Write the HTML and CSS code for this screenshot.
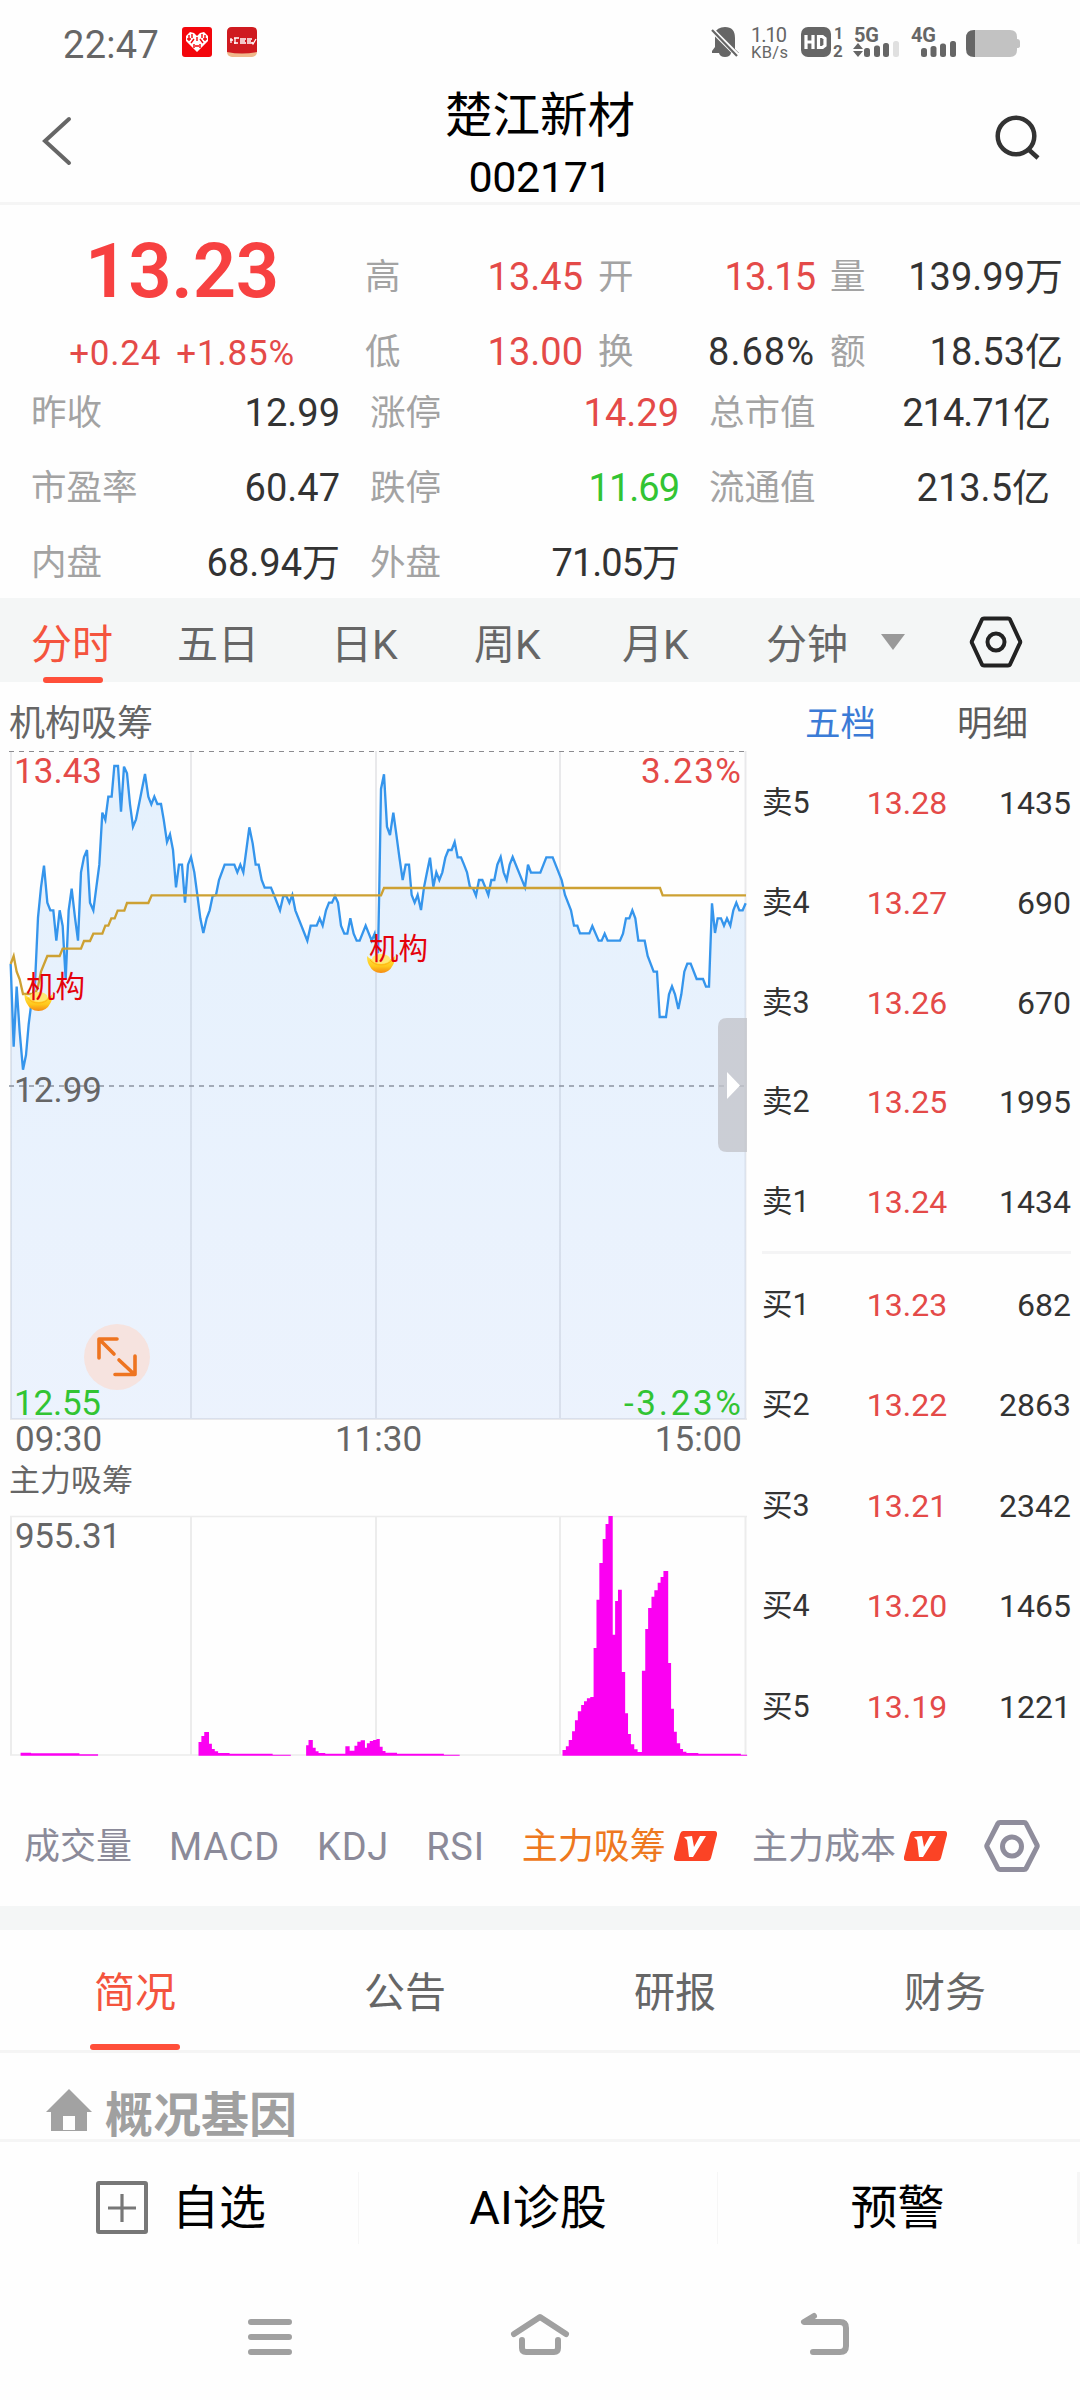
FILE: index.html
```html
<!DOCTYPE html>
<html lang="zh-CN">
<head>
<meta charset="utf-8">
<title>楚江新材 002171</title>
<link rel="stylesheet" href="styles.css">
</head>
<body>
<div class="phone">
  <header class="status">
    <span class="clock">22:47</span>
    <svg class="app" width="30" height="30" viewBox="0 0 30 30"><rect width="30" height="30" rx="3" fill="#f3060c"/><path d="M15 25 4 14V9l4-4 4 1 3 3 3-3 4-1 4 4v5z" fill="#fff"/><path d="M7 8v6M10 7v4M12 12l-3 4M15 10v4M18 12l3 4M20 7v4M23 8v6M12 17v4M18 17v4M5 12h4M21 12h4M13 19h4" stroke="#f3060c" stroke-width="1.4"/></svg>
    <svg class="app app2" width="30" height="30" viewBox="0 0 30 30"><rect width="30" height="30" rx="5" fill="#f0b98c"/><path d="M0 5q0-5 5-5h20q5 0 5 5v20q-15 3-30 0z" fill="#cf1a20"/><path d="M4 11v5M3 13h3M7 11h5M7 16h4M8 11v6M13 12h6M13 14h5M13 16h6M20 12h5M20 14h4M20 16h5M25 15l1 2 3-5" stroke="#fff" stroke-width="1.3" fill="none"/></svg>
    <span class="grow"></span>
    <svg class="sys" width="320" height="36" viewBox="705 24 320 36" fill="#666">
      <path d="M714 34q3-7 11-7 10 0 10 11v11l4 4h-8q-1 4-6 4t-6-4h-7v-2l3-4V36z"/>
      <path d="M711 29l27 27" stroke="#fff" stroke-width="5"/><path d="M712 30l25 26" stroke="#666" stroke-width="2.2"/>
      <text x="751" y="42" font-size="20" textLength="36">1.10</text>
      <text x="751" y="57.500" font-size="16.500" textLength="37">KB/s</text>
      <rect x="801" y="27" width="30" height="30" rx="7"/>
      <path d="M806 35v14M813 35v14M806 42h7M818.500 36.500v11h4l2.500-2v-7l-2.500-2z" fill="none" stroke="#fff" stroke-width="3.200"/>
      <text x="834" y="39" font-size="16" font-weight="700">1</text>
      <text x="833" y="57" font-size="17" font-weight="700">2</text>
      <text x="854" y="42" font-size="20" font-weight="700" textLength="25">5G</text>
      <path d="M853 49l5-6 5 6zM853 51l5 6 5-6z"/>
      <rect x="864" y="48" width="6" height="9" rx="2.500"/><rect x="874" y="45.500" width="6" height="11.500" rx="2.500"/><rect x="883" y="43" width="6" height="14" rx="2.500"/><rect x="893" y="41" width="6" height="16" rx="2.500" fill="#e0e0e0"/>
      <text x="911" y="42" font-size="20" font-weight="700" textLength="25">4G</text>
      <rect x="921" y="48" width="6" height="9" rx="2.500"/><rect x="930.500" y="46" width="6" height="11" rx="2.500"/><rect x="940" y="43.500" width="6" height="13.500" rx="2.500"/><rect x="950" y="41" width="6" height="16" rx="2.500"/>
      <path d="M974 30h36q7 0 7 7v2q3 0 3 3v4q0 2-3 2v2q0 7-7 7h-36z" fill="#c2c2c2"/><path d="M975 30h-1q-8 0-8 8v11q0 8 8 8h1z"/>
    </svg>
  </header>

  <nav class="title-bar">
    <svg width="34" height="52" viewBox="0 0 34 52" fill="none" stroke="#666" stroke-width="4" stroke-linecap="round"><path d="M29 5 5 27l24 22"/></svg>
    <div class="title"><div class="name">楚江新材</div><div class="code">002171</div></div>
    <svg width="48" height="48" viewBox="0 0 48 48" fill="none" stroke="#333" stroke-width="4.500"><circle cx="22" cy="22" r="18.300"/><path d="M34 35l10 9"/></svg>
  </nav>

  <section class="quote">
    <div class="summary">
      <div class="price">13.23</div>
      <div class="change"><span>+0.24</span><span>+1.85%</span></div>
    </div>
    <div class="grid top">
      <div class="cell"><label>高</label><b class="up">13.45</b></div>
      <div class="cell"><label>开</label><b class="up tight">13.15</b></div>
      <div class="cell"><label>量</label><b>139.99万</b></div>
      <div class="cell"><label>低</label><b class="up">13.00</b></div>
      <div class="cell"><label>换</label><b class="wide">8.68%</b></div>
      <div class="cell"><label>额</label><b>18.53亿</b></div>
    </div>
  </section>
  <section class="grid more">
    <div class="cell"><label>昨收</label><b>12.99</b></div>
    <div class="cell"><label>涨停</label><b class="up">14.29</b></div>
    <div class="cell"><label>总市值</label><b class="tight">214.71亿</b></div>
    <div class="cell"><label>市盈率</label><b>60.47</b></div>
    <div class="cell"><label>跌停</label><b class="down tight">11.69</b></div>
    <div class="cell"><label>流通值</label><b>213.5亿</b></div>
    <div class="cell"><label>内盘</label><b>68.94万</b></div>
    <div class="cell"><label>外盘</label><b class="tight">71.05万</b></div>
  </section>

  <nav class="periods">
    <span class="on">分时</span><span>五日</span><span>日K</span><span>周K</span><span>月K</span><span>分钟</span>
    <svg class="caret" width="24" height="16" viewBox="0 0 24 16"><path d="M0 0h24L12 16z" fill="#999"/></svg>
    <svg class="hex" width="54" height="52" viewBox="0 0 54 52" fill="none" stroke="#222" stroke-width="4"><path d="M15 2.500h24q1.500 0 2 1L51 25q.5 1 0 2L41 48.500q-.5 1-2 1H15q-1.500 0-2-1L3 27q-.5-1 0-2L13 3.500q.5-1 2-1z"/><circle cx="27" cy="26" r="8.500"/></svg>
  </nav>

  <main class="market">
    <div class="charts">
      <h2 class="chart-title">机构吸筹</h2>
      <svg class="chart" width="750" height="671" viewBox="0 749 750 671">
        <path d="M11 751V1419M191 751V1419M376 751V1419M560 751V1419M745.500 751V1419M10 1419H747" stroke="#e9e9eb" stroke-width="2"/>
        <path d="M9 751.500H747" stroke="#8c8c90" stroke-width="1.200" stroke-dasharray="5 5"/>
        <defs>
          <linearGradient id="area" x1="0" y1="0" x2="0" y2="1"><stop offset="0" stop-color="#2a90f5" stop-opacity=".12"/><stop offset="1" stop-color="#4a8cf5" stop-opacity=".1"/></linearGradient>
          <linearGradient id="gold" x1="0" y1="0" x2="0" y2="1"><stop offset="0" stop-color="#ffe34a"/><stop offset=".6" stop-color="#ffc91c"/><stop offset="1" stop-color="#f58a13"/></linearGradient>
          <path id="trend" d="M32,822 41,1070 50,890 59,1025 69,1139 78,1095 86,1003 92,955 105,880 114,683 123,592 132,527 142,638 151,661 160,661 169,752 179,661 188,708 197,868 206,661 215,596 225,683 234,752 243,547 252,501 261,480 270,638 280,661 289,592 298,524 307,368 316,390 325,320 335,320 343,228 354,228 363,365 372,230 381,250 390,343 399,410 408,388 417,343 426,297 435,252 445,320 454,343 463,320 472,342 483,342 491,388 501,456 510,433 519,480 528,592 537,524 546,524 555,638 564,524 573,501 583,547 592,615 601,685 610,729 620,685 629,661 638,618 648,615 657,570 674,524 703,524 712,547 721,524 730,547 739,480 748,412 758,460 767,524 776,524 785,570 794,593 813,593 822,615 840,661 850,618 859,618 868,638 877,615 886,661 922,752 932,707 950,707 959,685 968,707 978,661 987,638 996,638 1005,618 1014,638 1023,707 1033,731 1042,731 1051,685 1061,731 1070,752 1079,752 1097,707 1115,752 1124,731 1134,790 1138,590 1143,297 1152,253 1161,410 1170,435 1180,368 1189,433 1198,501 1208,570 1217,524 1227,524 1235,615 1244,638 1253,615 1263,660 1272,592 1281,547 1290,503 1300,590 1309,547 1318,570 1327,547 1336,503 1345,480 1355,480 1364,456 1373,502 1383,502 1392,524 1401,547 1410,592 1419,595 1428,617 1437,570 1447,570 1456,592 1465,615 1474,570 1483,570 1492,524 1502,501 1511,547 1520,570 1529,524 1538,501 1575,592 1584,524 1593,548 1621,548 1639,502 1658,502 1685,570 1695,615 1713,661 1722,707 1732,707 1740,730 1768,730 1777,708 1796,752 1805,752 1814,731 1823,752 1860,752 1869,731 1878,685 1888,685 1897,661 1906,685 1915,752 1934,752 1943,798 1961,845 1971,845 1979,981 1998,981 2007,913 2016,889 2025,913 2035,957 2044,913 2053,845 2062,821 2072,821 2090,867 2109,867 2118,890 2127,890 2136,640 2145,729 2153,685 2163,685 2172,707 2181,685 2191,707 2200,661 2209,638 2218,661 2228,661 2237,640"/>
          <g id="ingot"><path d="M-14-8q0 6 2 9 4 8 12 8t12-8q2-3 2-9-4 5-14 5t-14-5z" fill="url(#gold)"/><ellipse cy="-5" rx="9" ry="5" fill="#ffe873"/><path d="M-11-4q4 5 11 5t11-5" fill="none" stroke="#ffb515"/></g>
        </defs>
        <g transform="translate(0 690) scale(.33333)" fill="none" stroke-width="7">
          <path fill="url(#area)" d="M32,2187V822L41,1070 50,890 59,1025 69,1139 78,1095 86,1003 92,955 105,880 114,683 123,592 132,527 142,638 151,661 160,661 169,752 179,661 188,708 197,868 206,661 215,596 225,683 234,752 243,547 252,501 261,480 270,638 280,661 289,592 298,524 307,368 316,390 325,320 335,320 343,228 354,228 363,365 372,230 381,250 390,343 399,410 408,388 417,343 426,297 435,252 445,320 454,343 463,320 472,342 483,342 491,388 501,456 510,433 519,480 528,592 537,524 546,524 555,638 564,524 573,501 583,547 592,615 601,685 610,729 620,685 629,661 638,618 648,615 657,570 674,524 703,524 712,547 721,524 730,547 739,480 748,412 758,460 767,524 776,524 785,570 794,593 813,593 822,615 840,661 850,618 859,618 868,638 877,615 886,661 922,752 932,707 950,707 959,685 968,707 978,661 987,638 996,638 1005,618 1014,638 1023,707 1033,731 1042,731 1051,685 1061,731 1070,752 1079,752 1097,707 1115,752 1124,731 1134,790 1138,590 1143,297 1152,253 1161,410 1170,435 1180,368 1189,433 1198,501 1208,570 1217,524 1227,524 1235,615 1244,638 1253,615 1263,660 1272,592 1281,547 1290,503 1300,590 1309,547 1318,570 1327,547 1336,503 1345,480 1355,480 1364,456 1373,502 1383,502 1392,524 1401,547 1410,592 1419,595 1428,617 1437,570 1447,570 1456,592 1465,615 1474,570 1483,570 1492,524 1502,501 1511,547 1520,570 1529,524 1538,501 1575,592 1584,524 1593,548 1621,548 1639,502 1658,502 1685,570 1695,615 1713,661 1722,707 1732,707 1740,730 1768,730 1777,708 1796,752 1805,752 1814,731 1823,752 1860,752 1869,731 1878,685 1888,685 1897,661 1906,685 1915,752 1934,752 1943,798 1961,845 1971,845 1979,981 1998,981 2007,913 2016,889 2025,913 2035,957 2044,913 2053,845 2062,821 2072,821 2090,867 2109,867 2118,890 2127,890 2136,640 2145,729 2153,685 2163,685 2172,707 2181,685 2191,707 2200,661 2209,638 2218,661 2228,661 2237,640V2187z"/>
          <use href="#trend" stroke="#3595ec"/>
          <path stroke="#cda133" d="M32,822 41,798 50,845 59,868 69,912 105,912 114,890 123,845 142,798 179,798 188,776 243,776 252,753 270,753 280,731 307,731 316,707 325,707 334,685 344,685 353,662 373,662 381,639 445,639 455,616H1143L1152,594H1980L1988,616H2238"/>
        </g>
        <path d="M9 1086H747" stroke="#8b93a0" stroke-width="1.600" stroke-dasharray="5 5"/>
        <use href="#ingot" x="38.500" y="1002"/><use href="#ingot" x="381" y="964"/>
        <g font-size="29.500" fill="#e4020c"><text x="26" y="997">机构</text><text x="369" y="959">机构</text></g>
        <g font-size="35" class="axis">
          <text x="14" y="783" fill="#e44a48" textLength="88">13.43</text><text x="741" y="783" fill="#e44a48" text-anchor="end" textLength="100">3.23%</text>
          <text x="14" y="1102" fill="#666" textLength="88">12.99</text>
          <text x="14" y="1415" fill="#32c433" textLength="87">12.55</text><text x="741" y="1415" fill="#32c433" text-anchor="end" textLength="117">-3.23%</text>
        </g>
        <circle cx="117" cy="1357" r="33" fill="#f6e3df"/>
        <path d="M117 1339H99v19M100 1340l14 14M119 1360l15 14M115 1374.500h20V1356" fill="none" stroke="#ee7420" stroke-width="3.600" stroke-linecap="round" stroke-linejoin="round"/>
        <path d="M747 1018h-20q-9 0-9 9v116q0 9 9 9h20z" fill="#c3c4cb" opacity=".8"/><path d="M727 1072v27l13-13.500z" fill="#fff"/>
      </svg>
      <div class="times"><span>09:30</span><span>11:30</span><span>15:00</span></div>
      <h2 class="sub-title">主力吸筹</h2>
      <svg class="volume" width="750" height="244" viewBox="0 1514 750 244">
        <path d="M10 1516.500H747M10 1755H747" stroke="#ececec" stroke-width="1.500"/><path d="M11 1516V1755M191 1516V1755M376 1516V1755M560 1516V1755M745.500 1516V1755" stroke="#ececec" stroke-width="2"/>
        <text x="15" y="1548" font-size="35" fill="#666" textLength="106">955.31</text>
        <g transform="translate(0 1260) scale(.47832 .33333)" fill="#fb00f2">
          <path d="M43,1487V1478H65V1480H166V1483H205V1487Z"/>
          <path d="M415,1487V1446H421V1428H427V1416H437V1451H443V1467H449V1474H456V1479H480V1481H570V1484H608V1487Z"/>
          <path d="M640,1487V1456H645V1440H654V1463H660V1474H666V1479H680V1481H722V1459H731V1472H741V1457H747V1445H754V1441H763V1463H767V1450H773V1443H780V1440H787V1437H794V1460H800V1473H806V1478H830V1481H928V1484H961V1487Z"/>
          <path d="M1176,1487V1470H1183V1459H1189V1440H1196V1414H1202V1381H1208V1354H1215V1335H1221V1324H1227V1315H1234V1311H1241V1164H1247V1019H1253V909H1260V837H1266V792H1272V768H1281V1124H1286V1023H1292V989H1300V1236H1307V1360H1313V1422H1319V1453H1326V1468H1333V1476H1342V1232H1349V1107H1355V1044H1362V1010H1368V991H1375V968H1381V951H1387V933H1397V1209H1403V1346H1409V1415H1415V1450H1422V1467H1428V1475H1435V1479H1460V1481H1549V1484H1562V1487Z"/>
        </g>
      </svg>
    </div>
    <aside class="book">
      <div class="book-tabs"><span class="on">五档</span><span>明细</span></div>
      <div class="side sell">
        <div class="row"><span>卖5</span><b>13.28</b><i>1435</i></div>
        <div class="row"><span>卖4</span><b>13.27</b><i>690</i></div>
        <div class="row"><span>卖3</span><b>13.26</b><i>670</i></div>
        <div class="row"><span>卖2</span><b>13.25</b><i>1995</i></div>
        <div class="row"><span>卖1</span><b>13.24</b><i>1434</i></div>
      </div>
      <div class="side">
        <div class="row"><span>买1</span><b>13.23</b><i>682</i></div>
        <div class="row"><span>买2</span><b>13.22</b><i>2863</i></div>
        <div class="row"><span>买3</span><b>13.21</b><i>2342</i></div>
        <div class="row"><span>买4</span><b>13.20</b><i>1465</i></div>
        <div class="row"><span>买5</span><b>13.19</b><i>1221</i></div>
      </div>
    </aside>
  </main>

  <nav class="indicators">
    <span>成交量</span><span class="latin">MACD</span><span class="latin">KDJ</span><span class="latin">RSI</span>
    <span class="on">主力吸筹<svg class="vip" width="43" height="30" viewBox="0 0 43 30"><path d="M9 0h31q4 0 3 4l-6 23q-1 3-4 3H3q-4 0-3-4L6 3q1-3 3-3z" fill="#fb4325"/><path d="M10 6l8-1 2 11 6-11h6L19 26h-4L13 9z" fill="#fff"/></svg></span>
    <span>主力成本<svg class="vip" width="43" height="30" viewBox="0 0 43 30"><path d="M9 0h31q4 0 3 4l-6 23q-1 3-4 3H3q-4 0-3-4L6 3q1-3 3-3z" fill="#fb4325"/><path d="M10 6l8-1 2 11 6-11h6L19 26h-4L13 9z" fill="#fff"/></svg></span>
    <svg class="hex" width="56" height="52" viewBox="0 0 56 52" fill="none" stroke="#8f8d9c" stroke-width="5"><path d="M16 2.500h24q1.500 0 2 1L53 25q.5 1 0 2L42 48.500q-.5 1-2 1H16q-1.500 0-2-1L3 27q-.5-1 0-2L14 3.500q.5-1 2-1z"/><circle cx="28" cy="26.500" r="9.500"/></svg>
  </nav>

  <nav class="info-tabs"><span class="on">简况</span><span>公告</span><span>研报</span><span>财务</span></nav>
  <section class="profile">
    <svg width="46" height="43" viewBox="0 0 46 43"><path d="M23 0 46 23h-5v19H5V23H0z" fill="#a2a2a2"/><path d="M17 27h12v14H17z" fill="#fefefe"/></svg>
    <h3>概况基因</h3>
  </section>

  <footer class="actions">
    <span class="add"><svg width="52" height="53" viewBox="0 0 52 53" fill="none" stroke="#777" stroke-width="4"><rect x="2" y="2" width="48" height="49" rx="1"/><path d="M26 13v28M12 27h28" stroke-width="3.200"/></svg>自选</span>
    <span>AI诊股</span>
    <span>预警</span>
  </footer>
  <nav class="system">
    <svg width="60" height="60" viewBox="240 2304 60 60" stroke="#a0a0a0" stroke-width="6" stroke-linecap="round"><path d="M251 2322h38M251 2337h38M251 2352h38"/></svg>
    <svg width="60" height="60" viewBox="510 2304 60 60" fill="none" stroke="#a0a0a0" stroke-width="6" stroke-linecap="round" stroke-linejoin="round"><path d="M514 2334l26-17 26 17M522 2340v8q0 4 4 4h28q4 0 4-4v-8"/></svg>
    <svg width="60" height="60" viewBox="795 2304 60 60" fill="none" stroke="#a0a0a0" stroke-width="6" stroke-linecap="round" stroke-linejoin="round"><path d="M814 2316l-10 6h36q6 0 6 6v18q0 6-6 6h-27"/></svg>
  </nav>
</div>
</body>
</html>
```
FILE: styles.css
```css
* { box-sizing: border-box; }
body { margin: 0; background: #fefefe; }
.phone {
  width: 1080px;
  height: 2400px;
  overflow: hidden;
  display: flex;
  flex-direction: column;
  font-family: Roboto, "Noto Sans CJK SC", sans-serif;
  color: #333;
}
svg { display: block; flex: none; }
b, i { font-weight: 400; font-style: normal; }
h2, h3 { margin: 0; font-weight: 400; }
.grow { flex: 1; }

.status { flex: none; height: 84px; display: flex; align-items: center; padding: 4px 55px 4px 63px; }
.clock { font-size: 38px; line-height: 44px; letter-spacing: .3px; color: #666; width: 119px; padding-top: 5px; }
.app2 { margin-left: 15px; }

.title-bar {
  flex: none; height: 121px; border-bottom: 3px solid #f5f5f5;
  display: grid; grid-template-columns: 1fr auto 1fr; padding: 30px 38px 0 40px;
}
.title-bar > svg:last-child { justify-self: end; }
.title { display: flex; flex-direction: column; align-items: center; color: #000; margin: -29px 0 0 -2px; }
.name { font-size: 47.5px; line-height: 62px; }
.code { font-size: 43px; line-height: 60px; letter-spacing: -.3px; }

.quote { flex: none; height: 184px; display: flex; }
.summary { width: 364px; text-align: center; padding-top: 21px; }
.price { font-size: 76px; font-weight: 600; line-height: 90px; color: #f74141; letter-spacing: -.3px; }
.change { display: flex; gap: 15px; justify-content: center; font-size: 35px; line-height: 40px; color: #e44a48; margin-top: 18px; letter-spacing: .8px; }
.grid { display: grid; row-gap: 29px; font-size: 38px; line-height: 46px; }
.cell { display: flex; justify-content: space-between; height: 46px; }
.cell label { font-size: 35.5px; color: #a3a3a3; }
.cell b { letter-spacing: 0; }
.cell .tight { letter-spacing: -1px; }
.cell .wide { letter-spacing: 1px; }
.up { color: #e44a48; }
.down { color: #32c433; }
.top { flex: none; grid-template-columns: 218px 217px 233px; column-gap: 15px; padding: 49px 0 0 1px; align-content: start; }
.more { flex: none; height: 209px; grid-template-columns: 309px 309px 341px; column-gap: 30px; padding: 1px 0 0 31px; align-content: start; }

.periods { flex: none; height: 84px; background: #f4f6f6; display: flex; align-items: center; padding: 5px 0 0 31px; font-size: 41px; line-height: 84px; color: #666; }
.periods span { width: 146px; white-space: nowrap; margin-top: 4px; }
.periods span:nth-child(3) { width: 143px; margin-left: 8px; }
.periods span:nth-child(4) { width: 148px; }
.periods span:nth-child(5) { width: 144px; }
.periods span:nth-child(6) { width: 115px; }
.periods .on { color: #f4543e; position: relative; }
.periods .on::after { content: ""; position: absolute; left: 12px; bottom: 4px; width: 60px; height: 6px; border-radius: 3px; background: #ff4f3a; }
.periods .hex { margin-left: 64px; }
.periods .caret { margin-top: -1px; }
.periods .hex { margin-top: -1px; }

.market { flex: none; height: 1104px; display: flex; }
.charts { width: 750px; }
.chart { overflow: visible; }
.chart-title { font-size: 36px; line-height: 44px; height: 67px; padding: 20px 0 0 9px; color: #666; }
.times { display: flex; justify-content: space-between; height: 42px; padding: 0 8px 0 15px; font-size: 35px; line-height: 40px; color: #666; }
.sub-title { font-size: 31px; line-height: 38px; height: 52px; padding: 0 0 0 9px; color: #666; }

.book { flex: 1; padding: 0 9px 0 12px; }
.book-tabs { height: 70px; display: flex; gap: 81px; padding: 20px 0 0 43px; font-size: 35.5px; line-height: 44px; color: #5b5b5b; }
.book-tabs .on { color: #3b7bd6; }
.sell { border-bottom: 3px solid #f4f4f5; }
.row { display: grid; grid-template-columns: 96px 98px 1fr; height: 100.5px; line-height: 102px; font-size: 32px; }
.sell .row { height: 99.8px; }
.row span { font-size: 30.5px; }
.row b { color: #e44a48; text-align: center; }
.row i { text-align: right; }

.indicators { flex: none; height: 120px; display: flex; align-items: center; padding-left: 24px; font-size: 36px; color: #8b8a99; line-height: 52px; white-space: nowrap; }
.indicators span { display: flex; align-items: center; margin-right: 37px; padding-top: 2px; }
.indicators .latin { font-size: 38px; letter-spacing: .8px; }
.indicators .on { color: #ee7820; margin-right: 35px; }
.vip { margin: -3px 0 0 8px; }

.info-tabs { flex: none; height: 147px; border-top: 24px solid #f4f6f6; border-bottom: 3px solid #f5f5f5; display: flex; font-size: 41px; line-height: 126px; color: #666; }
.info-tabs span { flex: 1; text-align: center; position: relative; }
.info-tabs .on { color: #f4543e; }
.info-tabs .on::after { content: ""; position: absolute; left: 90px; bottom: 0; width: 90px; height: 6px; border-radius: 3px; background: #ff4f3a; }
.profile { flex: none; height: 89px; border-bottom: 3px solid #f5f5f5; display: flex; gap: 13px; padding: 36px 0 0 46px; overflow: hidden; }
.profile h3 { font-size: 48px; line-height: 58px; font-weight: 700; color: #a0a0a0; margin-top: -2px; }

.actions { flex: none; height: 132px; padding: 30px 0; display: flex; color: #000; font-size: 47px; line-height: 78px; }
.actions span { width: 359px; display: flex; justify-content: center; align-items: center; gap: 24px; border-right: 1px solid #f6f6f6; height: 72px; }
.actions .add { padding-left: 4px; }
.actions svg { margin-top: -1px; }
.actions span:last-child { width: 362px; border-right-width: 3px; }
.system { flex: 1; display: flex; padding: 30px 0 0 240px; }
.system svg + svg { margin-left: 210px; }
.system svg:last-child { margin-left: 225px; }
```
